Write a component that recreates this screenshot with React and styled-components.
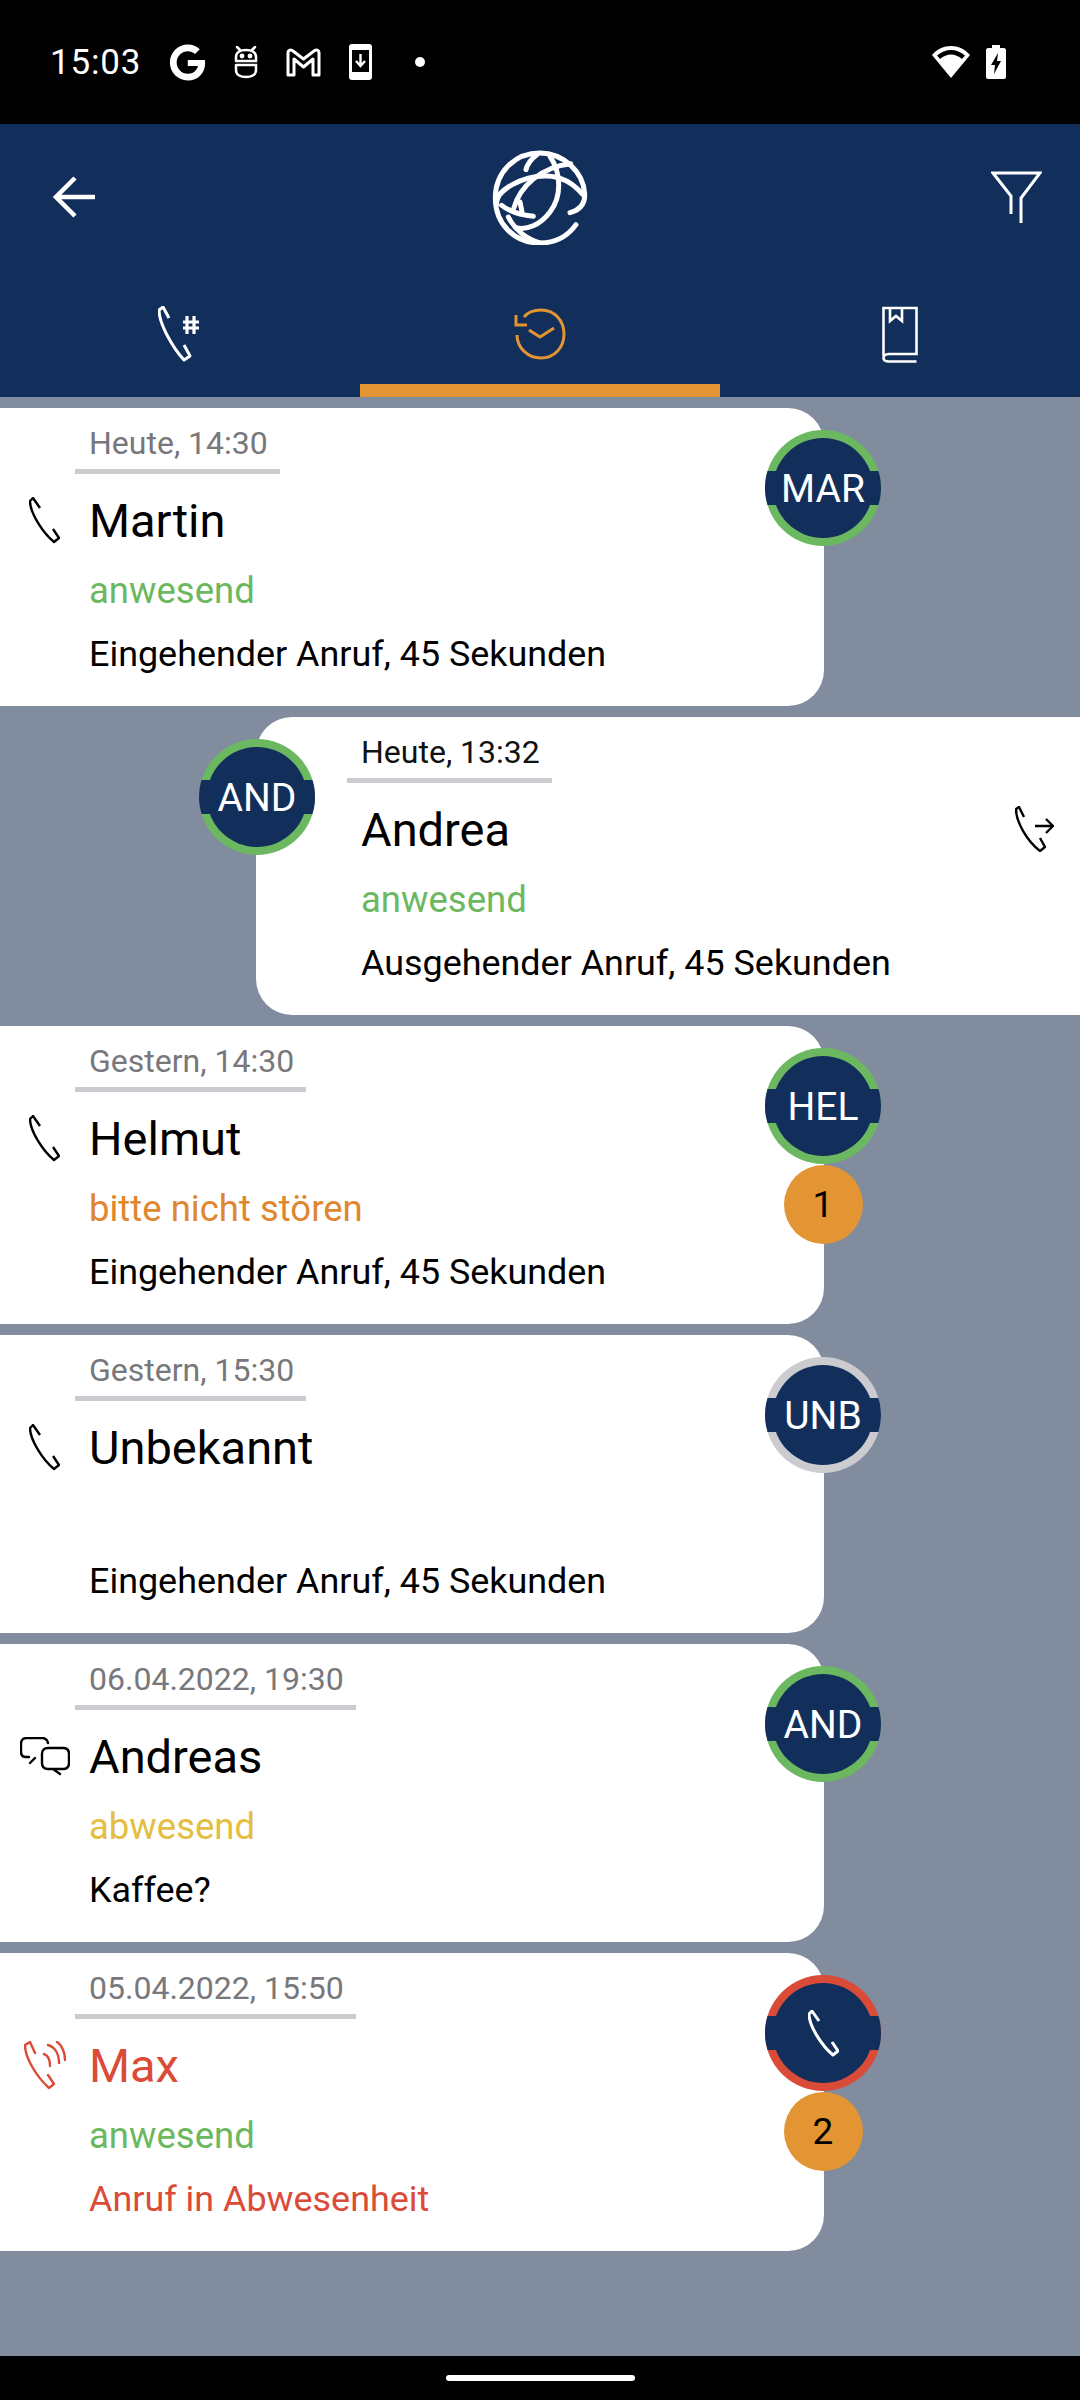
import React from "react";
import styled, { createGlobalStyle } from "styled-components";
import { FaGoogle } from "react-icons/fa";

const NAVY = "#122f5c";
const ORANGE = "#e29532";
const GREEN = "#6cb860";
const RED = "#da4b38";

const GlobalStyle = createGlobalStyle`
  html, body {
    margin: 0;
    padding: 0;
    background: #818c9f;
    font-family: Roboto, "Liberation Sans", sans-serif;
  }
`;

const Page = styled.div`
  display: flex;
  flex-direction: column;
  width: 1080px;
  height: 2400px;
  overflow: hidden;
  background: #818c9f;
`;

const StatusBar = styled.div`
  display: flex;
  align-items: center;
  justify-content: space-between;
  height: 124px;
  padding: 0 74px 0 50px;
  box-sizing: border-box;
  background: #000;
  color: #fff;
`;

const StatusGroup = styled.div`
  display: flex;
  align-items: center;
  gap: ${(p) => p.$gap}px;
`;

const Clock = styled.span`
  width: 91px;
  font-size: 35px;
  letter-spacing: 0.8px;
  font-weight: 400;
`;

const StatusDot = styled.span`
  width: 10px;
  height: 10px;
  margin-left: 15px;
  border-radius: 50%;
  background: #fff;
`;

const Header = styled.header`
  background: ${NAVY};
  color: #fff;
`;

const TopRow = styled.div`
  display: grid;
  grid-template-columns: 1fr auto 1fr;
  align-items: center;
  height: 146px;
  padding: 0 38px;
  box-sizing: border-box;

  & > :first-child {
    margin-left: 15px;
  }

  & > :last-child {
    justify-self: end;
  }
`;

const TabRow = styled.nav`
  display: grid;
  grid-template-columns: repeat(3, 360px);
  height: 127px;
`;

const Tab = styled.div`
  display: flex;
  align-items: center;
  justify-content: center;
  padding-top: 14px;
  box-sizing: border-box;
  border-bottom: 13px solid ${(p) => (p.$active ? ORANGE : "transparent")};
`;

const CallList = styled.main`
  flex: 1;
  display: flex;
  flex-direction: column;
  gap: 11px;
  padding-top: 11px;
`;

const Card = styled.article`
  position: relative;
  display: grid;
  grid-template-columns: ${(p) => (p.$right ? "105px 1fr 65px" : "89px 1fr")};
  grid-template-rows: 66px 92px 48px 80px;
  width: 824px;
  height: 298px;
  box-sizing: border-box;
  align-self: ${(p) => (p.$right ? "flex-end" : "flex-start")};
  background: #fff;
  border-radius: ${(p) => (p.$right ? "36px 0 0 36px" : "0 36px 36px 0")};
`;

const DateLabel = styled.div`
  grid-column: 2;
  grid-row: 1;
  justify-self: start;
  height: 66px;
  margin-left: -14px;
  padding: 0 12px 0 14px;
  box-sizing: border-box;
  border-bottom: 5px solid #ccccd0;
  color: ${(p) => (p.$dark ? "#111" : "#77777c")};
  font-size: 32px;
  line-height: 70px;
`;

const IconSlot = styled.div`
  grid-column: ${(p) => (p.$right ? 3 : 1)};
  grid-row: 2;
  display: flex;
  align-items: center;
  justify-content: ${(p) => (p.$right ? "flex-start" : "center")};
`;

const Name = styled.div`
  grid-column: 2;
  grid-row: 2;
  align-self: center;
  padding-top: 1px;
  color: ${(p) => p.$color || "#000"};
  font-size: 47px;
`;

const Presence = styled.div`
  grid-column: 2;
  grid-row: 3;
  align-self: center;
  color: ${(p) => p.$color};
  font-size: 36.5px;
`;

const Detail = styled.div`
  grid-column: 2;
  grid-row: 4;
  align-self: center;
  color: ${(p) => p.$color || "#000"};
  font-size: 35.9px;
`;

const AvatarStack = styled.div`
  position: absolute;
  top: 22px;
  ${(p) => (p.$right ? "left: -57px;" : "right: -57px;")}
  display: flex;
  flex-direction: column;
  align-items: center;
  width: 116px;
`;

const Avatar = styled.div`
  position: relative;
  display: flex;
  align-items: center;
  justify-content: center;
  width: 116px;
  height: 116px;
  overflow: hidden;
  border-radius: 50%;
  background: ${(p) => p.$ring};

  &::before {
    content: "";
    position: absolute;
    inset: 8px;
    border-radius: 50%;
    background: ${NAVY};
  }

  &::after {
    content: "";
    position: absolute;
    left: 0;
    right: 0;
    top: 41px;
    height: 34px;
    background: ${NAVY};
  }
`;

const AvatarText = styled.span`
  position: relative;
  z-index: 1;
  padding-top: 2px;
  color: #fff;
  font-size: 39px;
  line-height: 1;
`;

const AvatarIcon = styled.span`
  position: relative;
  z-index: 1;
  display: flex;
`;

const CountBadge = styled.div`
  display: flex;
  align-items: center;
  justify-content: center;
  width: 79px;
  height: 79px;
  margin-top: 1px;
  border-radius: 50%;
  background: ${ORANGE};
  color: #000;
  font-size: 37px;
`;

const NavBar = styled.div`
  display: flex;
  align-items: center;
  justify-content: center;
  height: 44px;
  background: #000;
`;

const HomePill = styled.div`
  width: 189px;
  height: 6px;
  border-radius: 3px;
  background: #fff;
`;

const RobotIcon = () => (
  <svg width="24" height="33" viewBox="0 0 24 33" fill="none" stroke="#fff" strokeWidth="2.5" strokeLinecap="round">
    <path d="M2 15V11C2 6 7 4 12 4S22 6 22 11V15H2M2 19H22V24C22 29 17 31 12 31S2 29 2 24V19M3 1L6 4M21 1L18 4" />
    <circle cx="8" cy="10" r="1.2" fill="#fff" />
    <circle cx="16" cy="10" r="1.2" fill="#fff" />
  </svg>
);

const MailIcon = () => (
  <svg width="35" height="29" viewBox="0 0 35 29" fill="none" stroke="#fff" strokeWidth="3" strokeLinejoin="round">
    <path d="M2 27V5C2 2 5 1 7 3L17.5 11L28 3C30 1 33 2 33 5V27H27V11L17.5 19L8 11V27Z" />
  </svg>
);

const DownloadIcon = () => (
  <svg width="23" height="36" viewBox="0 0 23 36">
    <rect width="23" height="36" rx="3" fill="#fff" />
    <rect x="3" y="6" width="17" height="22" fill="#000" />
    <path d="M11.5 10V21M7 17L11.5 22L16 17" fill="none" stroke="#fff" strokeWidth="2.4" />
  </svg>
);

const WifiIcon = () => (
  <svg width="38" height="32" viewBox="0 0 38 32">
    <path
      fillRule="evenodd"
      fill="#fff"
      d="M0 9C10 -3 28 -3 38 9L19 32ZM5 9.5L8 13C15 7 23 7 30 13L33 9.5C25 2 13 2 5 9.5Z"
    />
  </svg>
);

const BatteryIcon = () => (
  <svg width="20" height="34" viewBox="0 0 20 34">
    <path fill="#fff" d="M6 0H14V3H18C19 3 20 4 20 5V32C20 33 19 34 18 34H2C1 34 0 33 0 32V5C0 4 1 3 2 3H6Z" />
    <path fill="#000" d="M12 8L5 20H9L8 29L15 16H11Z" />
  </svg>
);

const BackIcon = () => (
  <svg width="42" height="42" viewBox="0 0 42 42" fill="none" stroke="#fff" strokeWidth="4.5">
    <path d="M42 21H4M22 2L3 21L22 40" />
  </svg>
);

const GlobeLogo = () => (
  <svg width="96" height="96" viewBox="156 56 288 288" fill="none" stroke="#fff" strokeWidth="15" strokeLinecap="round">
    <path d="M408 283C380 322 340 338 300 338C222 338 166 280 166 203C166 125 225 68 300 68C370 68 430 125 434 190C436 225 415 240 390 247" />
    <path d="M170 222C165 180 250 135 320 137C370 138 405 165 428 192" />
    <path d="M258 118C262 100 275 85 292 72" />
    <path d="M222 232C240 170 300 110 392 100" />
    <path d="M330 78C365 130 365 200 330 245C300 285 260 300 228 292" />
    <path d="M240 215L247 250M185 225C210 245 250 255 280 258" />
    <path d="M205 260C225 300 260 325 300 338" />
  </svg>
);

const FilterIcon = () => (
  <svg width="51" height="52" viewBox="0 0 51 52" fill="none" stroke="#fff" strokeWidth="3">
    <path d="M20 43V25L2 2H49L30 27V52" />
  </svg>
);

const HANDSET = "M11 11L4 1L1 4C1 16 14 36 25 45L30 41L24 32";

const PhoneIcon = ({ color = "#000", weight = 2.4 }) => (
  <svg width="31" height="47" viewBox="0 0 31 47" fill="none" stroke={color} strokeWidth={weight} strokeLinejoin="round">
    <path d={HANDSET} />
  </svg>
);

const DialpadIcon = () => (
  <svg width="44" height="56" viewBox="0 0 44 56" fill="none" stroke="#fff" strokeLinejoin="round">
    <path strokeWidth="3" d="M11 12L5 1L1 4C1 18 15 42 26 54L32 50L26 39" />
    <path strokeWidth="3.2" d="M29 10V28M36 10V28M25 16H41M25 22H41" />
  </svg>
);

const HistoryIcon = () => (
  <svg width="52" height="52" viewBox="0 0 52 52" fill="none" stroke={ORANGE} strokeWidth="3">
    <path d="M10 9C14 4 20 2 27 2C40 2 50 12 50 26S40 50 27 50S3 40 3 27" />
    <path d="M2 7V17H13M15 22L26 29L40 20" />
  </svg>
);

const BookIcon = () => (
  <svg width="36" height="57" viewBox="0 0 36 57" fill="none" stroke="#fff" strokeWidth="2.6">
    <path d="M1.5 50V2H34.5V48H7C3 48 1.5 50 1.5 52C1.5 54 3 55.5 7 55.5H34.5" />
    <path d="M8 3V15L14 10L20 15V3" />
  </svg>
);

const OutgoingIcon = () => (
  <svg width="40" height="46" viewBox="0 0 40 46" fill="none" stroke="#000" strokeWidth="2.4" strokeLinejoin="round">
    <path d="M9 11L4 1L1 3C1 16 12 35 25 45L30 41L25 32" />
    <path d="M20 20H38M31 13L38 20L31 27" />
  </svg>
);

const ChatIcon = () => (
  <svg width="50" height="39" viewBox="0 0 50 39" fill="none" stroke="#000" strokeWidth="2.4" strokeLinecap="round">
    <path d="M28 6C27 2 25 1 22 1H7C3 1 1 3 1 7V15C1 18 3 20 6 20H9M10 26L15 21" />
    <path d="M28 11H43C47 11 49 13 49 17V26C49 30 47 32 43 32H33L40 37M33 32H28C24 32 22 30 22 26V17C22 13 24 11 28 11" />
  </svg>
);

const MissedIcon = () => (
  <svg width="42" height="48" viewBox="0 0 42 48" fill="none" stroke={RED} strokeWidth="2.4" strokeLinejoin="round" strokeLinecap="round">
    <path d="M11 12L6 1L1 4C1 18 14 37 25 47L30 43L24 34" />
    <path d="M20 13C23 14 26 18 26 25M24 4C31 6 35 13 35 22M33 1C38 4 41 12 41 19" />
  </svg>
);

const calls = [
  { date: "Heute, 14:30", name: "Martin", presence: "anwesend", presenceColor: GREEN, detail: "Eingehender Anruf, 45 Sekunden", initials: "MAR", ring: GREEN, icon: <PhoneIcon /> },
  { date: "Heute, 13:32", dark: true, right: true, name: "Andrea", presence: "anwesend", presenceColor: GREEN, detail: "Ausgehender Anruf, 45 Sekunden", initials: "AND", ring: GREEN, icon: <OutgoingIcon /> },
  { date: "Gestern, 14:30", name: "Helmut", presence: "bitte nicht stören", presenceColor: "#e0862f", detail: "Eingehender Anruf, 45 Sekunden", initials: "HEL", ring: GREEN, count: 1, icon: <PhoneIcon /> },
  { date: "Gestern, 15:30", name: "Unbekannt", detail: "Eingehender Anruf, 45 Sekunden", initials: "UNB", ring: "#ccccd0", icon: <PhoneIcon /> },
  { date: "06.04.2022, 19:30", name: "Andreas", presence: "abwesend", presenceColor: "#e3be40", detail: "Kaffee?", initials: "AND", ring: GREEN, icon: <ChatIcon /> },
  { date: "05.04.2022, 15:50", name: "Max", nameColor: RED, presence: "anwesend", presenceColor: GREEN, detail: "Anruf in Abwesenheit", detailColor: RED, ring: RED, count: 2, icon: <MissedIcon /> },
];

const CallCard = ({ call }) => (
  <Card $right={call.right}>
    <DateLabel $dark={call.dark}>{call.date}</DateLabel>
    <IconSlot $right={call.right}>{call.icon}</IconSlot>
    <Name $color={call.nameColor}>{call.name}</Name>
    {call.presence && <Presence $color={call.presenceColor}>{call.presence}</Presence>}
    <Detail $color={call.detailColor}>{call.detail}</Detail>
    <AvatarStack $right={call.right}>
      <Avatar $ring={call.ring}>
        {call.initials ? (
          <AvatarText>{call.initials}</AvatarText>
        ) : (
          <AvatarIcon>
            <PhoneIcon color="#fff" weight={3} />
          </AvatarIcon>
        )}
      </Avatar>
      {call.count && <CountBadge>{call.count}</CountBadge>}
    </AvatarStack>
  </Card>
);

const App = () => (
  <Page>
    <GlobalStyle />
    <StatusBar>
      <StatusGroup $gap={28}>
        <Clock>15:03</Clock>
        <FaGoogle size={37} color="#fff" />
        <RobotIcon />
        <MailIcon />
        <DownloadIcon />
        <StatusDot />
      </StatusGroup>
      <StatusGroup $gap={16}>
        <WifiIcon />
        <BatteryIcon />
      </StatusGroup>
    </StatusBar>
    <Header>
      <TopRow>
        <BackIcon />
        <GlobeLogo />
        <FilterIcon />
      </TopRow>
      <TabRow>
        <Tab>
          <DialpadIcon />
        </Tab>
        <Tab $active>
          <HistoryIcon />
        </Tab>
        <Tab>
          <BookIcon />
        </Tab>
      </TabRow>
    </Header>
    <CallList>
      {calls.map((call) => (
        <CallCard key={call.date} call={call} />
      ))}
    </CallList>
    <NavBar>
      <HomePill />
    </NavBar>
  </Page>
);

export default App;
